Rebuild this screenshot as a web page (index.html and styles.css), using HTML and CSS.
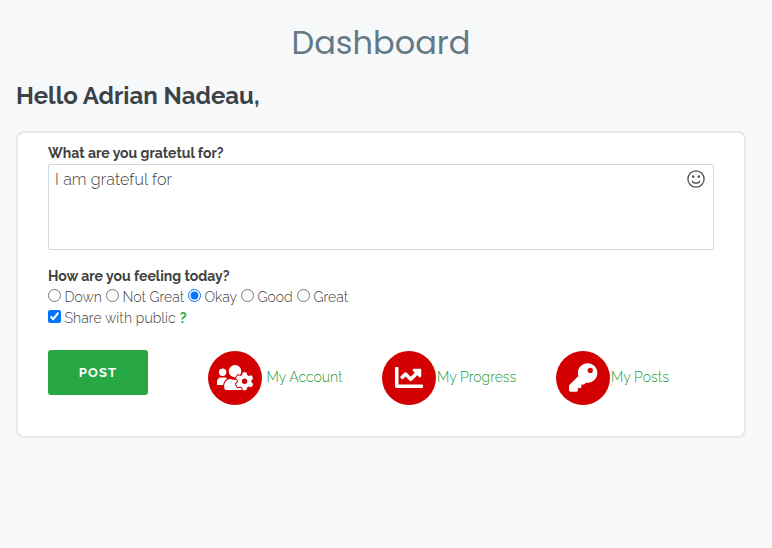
FILE: index.html
```
<!DOCTYPE html>
<html lang="en">
<head>
<meta charset="utf-8">
<title>Dashboard</title>
<link rel="stylesheet" href="styles.css">
</head>
<body>
<h1 class="title"><span>Dashboard</span></h1>
<h2 class="hello"><span>Hello Adrian Nadeau,</span></h2>
<form class="card">
  <label class="question q1" for="grateful">What are you gratetul for?</label>
  <div class="entry">
    <textarea id="grateful">I am grateful for</textarea>
    <svg class="smile" viewBox="0 0 18 18"><circle cx="9" cy="9" r="8.1" fill="none" stroke="#505050" stroke-width="1.3"/><circle cx="6.2" cy="6.6" r="1.3"/><circle cx="11.8" cy="6.6" r="1.3"/><path d="M5.1 10.7c1.2 3.3 6.6 3.3 7.8 0" fill="none" stroke="#505050" stroke-width="1.3"/></svg>
  </div>
  <p class="question q2">How are you feeling today?</p>
  <div class="choices">
    <label class="c1"><input type="radio" name="mood"><span>Down</span></label>
    <label class="c2"><input type="radio" name="mood"><span>Not Great</span></label>
    <label class="c3"><input type="radio" name="mood" checked><span>Okay</span></label>
    <label class="c4"><input type="radio" name="mood"><span>Good</span></label>
    <label class="c5"><input type="radio" name="mood"><span>Great</span></label>
  </div>
  <div class="choices share">
    <label><input type="checkbox" checked><span>Share with public</span></label><b>?</b>
  </div>
  <div class="actions">
    <button type="button">POST</button>
    <a class="link account"><svg class="disc" viewBox="0 0 54 54"><circle cx="27" cy="27" r="27" fill="#d20000"/>
      <g fill="#fff"><circle cx="14.6" cy="21.3" r="3.7"/><path d="M9 34v-3.6c0-2.3 1.7-4 4-4h3.4c1.2 0 2.2.5 2.9 1.2-2.5 1.5-3.8 3.6-4.1 6.4z"/><circle cx="27" cy="20.2" r="6.2"/><path d="M16.2 36.8v-2.1c0-3.8 2.9-6.8 6.6-6.8 2.7 1.2 5.6 1.2 8.3 0l4 3V39H18.4c-1.2 0-2.2-.9-2.2-2.2z"/></g>
      <path fill="#fff" stroke="#d20000" stroke-width="2" stroke-linejoin="round" paint-order="stroke" d="M34.7 21.5q1.9-.5 3.8 0l.6 2.5 1.7 1 2.5-.8q1.4 1.4 1.9 3.2l-1.8 1.8v2l1.8 1.8q-.5 1.8-1.9 3.2l-2.5-.7-1.7 1-.6 2.5q-1.9.4-3.8 0l-.6-2.5-1.7-1-2.5.7Q28.5 34.800 28 33l1.800-1.800v-2L28 27.400q.5-1.800 1.900-3.200l2.500.8 1.700-1z"/><circle cx="36.6" cy="30.2" r="2.7" fill="#d20000"/></svg><span>My Account</span></a>
    <a class="link progress"><svg class="disc" viewBox="0 0 54 54"><circle cx="27" cy="27" r="27" fill="#d20000"/><path fill="#fff" transform="translate(13 12.5) scale(.0547)" d="M496 384H64V80c0-8.84-7.16-16-16-16H16C7.16 64 0 71.16 0 80v336c0 17.67 14.33 32 32 32h464c8.84 0 16-7.16 16-16v-32c0-8.84-7.16-16-16-16zM464 96H345.94c-21.38 0-32.09 25.85-16.97 40.97l32.4 32.4L288 242.75l-73.37-73.37c-12.5-12.5-32.76-12.5-45.25 0l-68.69 68.69c-6.25 6.25-6.25 16.38 0 22.63l22.62 22.62c6.25 6.25 16.38 6.25 22.63 0L192 237.25l73.37 73.37c12.5 12.5 32.76 12.5 45.25 0l96-96 32.4 32.4c15.12 15.12 40.97 4.41 40.97-16.97V112c.01-8.84-7.15-16-15.99-16z"/></svg><span>My Progress</span></a>
    <a class="link posts"><svg class="disc" viewBox="0 0 54 54"><circle cx="27" cy="27" r="27" fill="#d20000"/><path fill="#fff" transform="translate(13 12.3) scale(.0554)" d="M512 176.001C512 273.203 433.202 352 336 352c-11.22 0-22.19-1.062-32.827-3.069l-24.012 27.014A23.999 23.999 0 0 1 261.223 384H224v40c0 13.255-10.745 24-24 24h-40v40c0 13.255-10.745 24-24 24H24c-13.255 0-24-10.745-24-24v-78.059c0-6.365 2.529-12.47 7.029-16.971l161.802-161.802C163.108 213.814 160 195.271 160 176 160 78.798 238.797.001 335.999 0 433.488-.001 512 78.511 512 176.001zM336 128c0 26.51 21.49 48 48 48s48-21.49 48-48-21.49-48-48-48-48 21.49-48 48z"/></svg><span>My Posts</span></a>
  </div>
</form>
</body>
</html>
```
FILE: styles.css
```
* { box-sizing: border-box; }
body { margin: 0; padding: 22px 26px 0 16px; height: 548px; overflow: hidden; background: #f6f8fa; color: #404040; font: 300 14px/21px Raleway, Lato, sans-serif; white-space: nowrap; }
h1, h2, p { margin: 0; }
.title { text-align: center; font: 400 32px/42px Poppins, Inter, sans-serif; color: #647985; }
.hello { margin-top: 16px; font-size: 24px; line-height: 32px; font-weight: 700; color: #3b4348; }
.card { display: flex; flex-direction: column; margin-top: 19px; height: 307px; padding: 10px 30px 0; border: 2px solid #e7eaed; border-radius: 8px; background: #fff; }
.question { font-weight: 700; height: 21px; }
.q2 { margin-top: 15px; }
.entry { position: relative; height: 87px; }
textarea { display: block; width: 100%; height: 86px; padding: 4px 6px; border: 1px solid #ced8e2; border-radius: 2px; resize: none; outline: 0; background: #fff; color: #404040; font: 300 16px/22px Raleway, Lato, sans-serif; letter-spacing: .12px; }
.smile { position: absolute; right: 9.5px; top: 6px; width: 18px; height: 18px; fill: #505050; }
.choices { display: flex; height: 21px; }
.choices label { display: flex; }
.choices input { width: 13px; height: 13px; margin: 2px 3.5px 0 0; flex: none; }
.c1 { width: 58px; } .c2 { width: 82px; } .c3 { width: 53px; } .c4 { width: 56px; }
.share b { margin-left: 4px; color: #28a745; font-weight: 700; }
.share label { letter-spacing: .09px; }
.actions { display: flex; margin-top: 21px; }
button { flex: none; width: 100px; height: 45px; padding: 0; border: 0; border-radius: 3px; background: #28a745; color: #fff; font: 700 13px/45px Raleway, Lato, sans-serif; letter-spacing: 1.2px; }
.link { flex: none; display: flex; align-items: center; width: 174px; height: 55px; color: #1e9a3a; }
.link span { margin-left: 1px; }
.account { margin-left: 60px; }
.account span { margin-left: 4.5px; }
.posts { width: 128px; }
.disc { width: 54px; height: 54px; flex: none; }
```
